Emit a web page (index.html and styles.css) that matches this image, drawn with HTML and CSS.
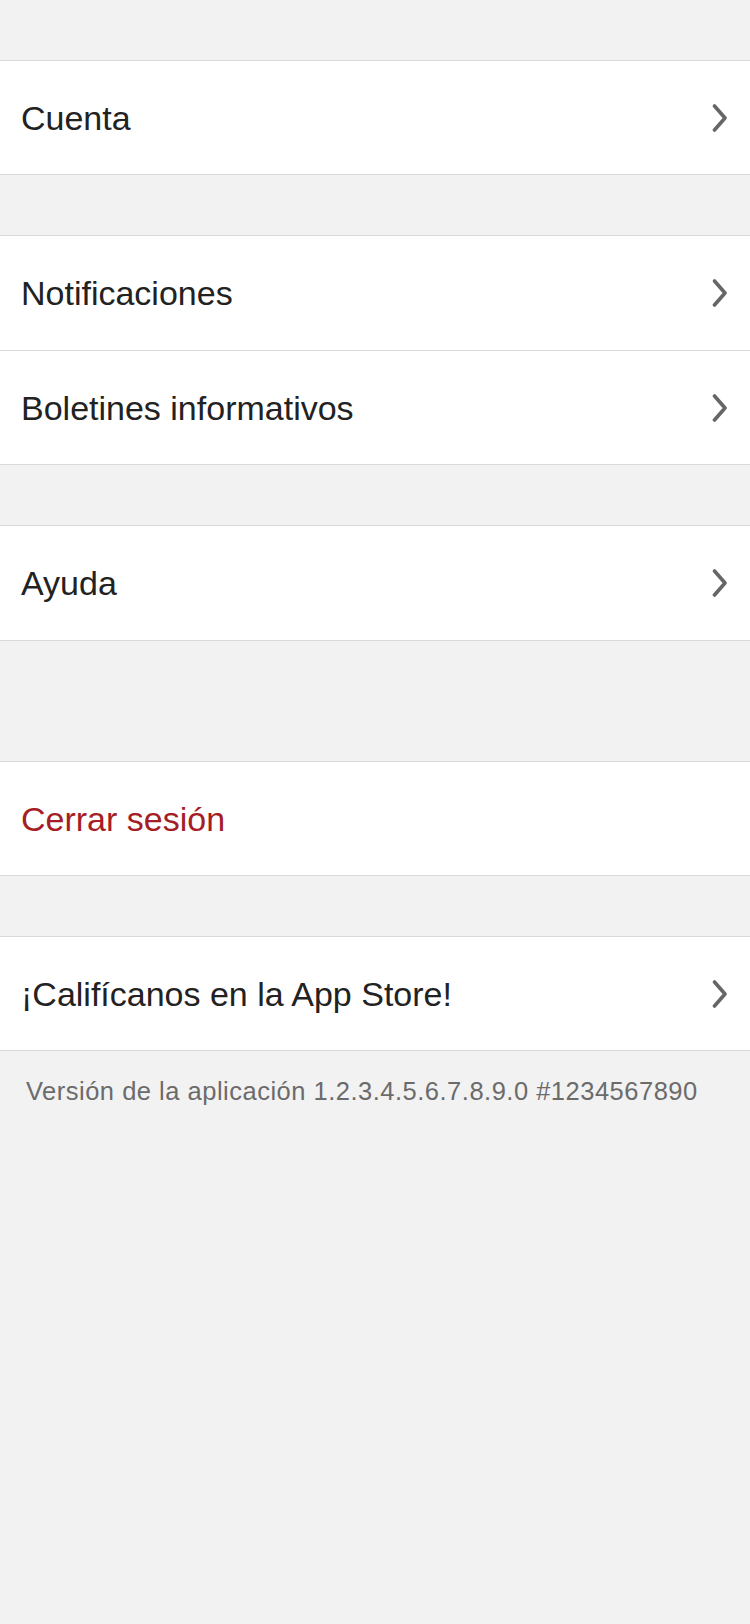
FILE: index.html
```html
<!DOCTYPE html>
<html lang="es">
<head>
<meta charset="utf-8">
<title>Ajustes</title>
<link rel="stylesheet" href="styles.css">
</head>
<body>
<main class="settings">
  <section class="group group-first">
    <div class="row"><span class="label">Cuenta</span><svg class="chev" viewBox="0 0 16 28" width="16" height="28"><path d="M2.5 2 L13 14 L2.5 26"/></svg></div>
  </section>
  <section class="group">
    <div class="row"><span class="label">Notificaciones</span><svg class="chev" viewBox="0 0 16 28" width="16" height="28"><path d="M2.5 2 L13 14 L2.5 26"/></svg></div>
    <div class="row"><span class="label">Boletines informativos</span><svg class="chev" viewBox="0 0 16 28" width="16" height="28"><path d="M2.5 2 L13 14 L2.5 26"/></svg></div>
  </section>
  <section class="group">
    <div class="row"><span class="label">Ayuda</span><svg class="chev" viewBox="0 0 16 28" width="16" height="28"><path d="M2.5 2 L13 14 L2.5 26"/></svg></div>
  </section>
  <section class="group group-far">
    <div class="row"><span class="label label-danger">Cerrar sesión</span></div>
  </section>
  <section class="group">
    <div class="row"><span class="label">¡Califícanos en la App Store!</span><svg class="chev" viewBox="0 0 16 28" width="16" height="28"><path d="M2.5 2 L13 14 L2.5 26"/></svg></div>
  </section>
  <p class="version">Versión de la aplicación 1.2.3.4.5.6.7.8.9.0 #1234567890</p>
</main>
</body>
</html>
```
FILE: styles.css
```css
html, body {
  margin: 0;
  padding: 0;
  background: #f2f2f2;
}
body {
  font-family: "Liberation Sans", Arial, sans-serif;
  width: 750px;
  min-height: 1624px;
}
.settings {
  display: flex;
  flex-direction: column;
  padding-top: 60px;
}
.group {
  background: #ffffff;
  border-top: 1px solid #d9d9d9;
  border-bottom: 1px solid #d9d9d9;
  margin-top: 60px;
}
.group-first {
  margin-top: 0;
}
.group-far {
  margin-top: 120px;
}
.row {
  height: 114px;
  display: flex;
  align-items: center;
  justify-content: space-between;
  padding: 0 22px 0 21px;
  box-sizing: border-box;
}
.row + .row {
  border-top: 1px solid #d9d9d9;
}
.group-first .row,
.group-far .row,
.group:last-of-type .row {
  height: 113px;
}
.label {
  font-size: 34px;
  color: #222222;
  line-height: 40px;
}
.label-danger {
  color: #a51d25;
}
.chev {
  display: block;
  fill: none;
  stroke: #666666;
  stroke-width: 3.6;
  stroke-linecap: round;
  stroke-linejoin: round;
}
.version {
  margin: 25px 0 0 26px;
  font-size: 25.5px;
  letter-spacing: 0.5px;
  line-height: 30px;
  color: #6b6b6b;
}
```
